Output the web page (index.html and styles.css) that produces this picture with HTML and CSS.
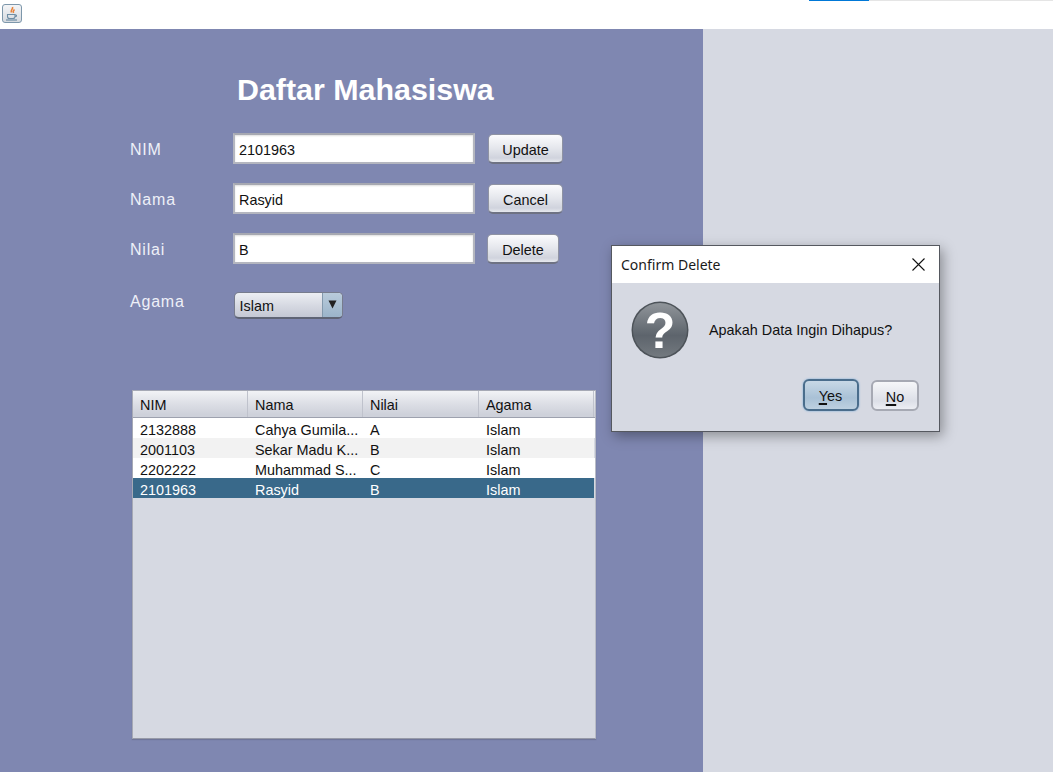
FILE: index.html
```html
<!DOCTYPE html>
<html lang="en">
<head>
    <meta charset="UTF-8">
    <meta name="viewport" content="width=device-width, initial-scale=1.0">
    <title>Daftar Mahasiswa</title>
    <link rel="stylesheet" href="styles.css">
</head>
<body>
    <div class="topbar">
        <div class="app-btn">
            <svg width="16" height="16" viewBox="0 0 16 16">
                <path d="M8.500 1c1 2-2.500 3-1 5.500M10.500 3.500c-1 1-2 1.500-1 3.500" fill="none" stroke="#e8823a" stroke-width="1.600"/>
                <path d="M3.500 8.500h7.500v2c0 1.500-1.500 2-2 2h-3.500c-.5 0-2-.5-2-2z" fill="none" stroke="#6f8ea5" stroke-width="1.100"/>
                <path d="M2 14h11" stroke="#6f8ea5" stroke-width="1.200"/>
                <path d="M11 9h1.500v1.500h-1.500" fill="none" stroke="#6f8ea5"/>
            </svg>
        </div>
        <div class="strip"><span class="strip-on"></span><span class="strip-off"></span></div>
    </div>

    <div class="main">
        <div class="panel">
            <h1 class="title">Daftar Mahasiswa</h1>

            <div class="form">
                <label class="lbl">NIM</label>
                <div class="field">2101963</div>
                <button type="button" class="btn">Update</button>

                <label class="lbl">Nama</label>
                <div class="field">Rasyid</div>
                <button type="button" class="btn">Cancel</button>

                <label class="lbl">Nilai</label>
                <div class="field">B</div>
                <button type="button" class="btn btn-small">Delete</button>
            </div>

            <div class="agama-row">
                <label class="lbl lbl-agama">Agama</label>
                <div class="combo">
                    <span class="combo-text">Islam</span>
                    <span class="combo-arrow"><svg width="9" height="9" viewBox="0 0 9 9"><path d="M.5 .5h8L4.500 8.500z" fill="#222"/></svg></span>
                </div>
            </div>

            <div class="table-box">
                <div class="row head">
                    <div class="cell">NIM</div>
                    <div class="cell">Nama</div>
                    <div class="cell">Nilai</div>
                    <div class="cell">Agama</div>
                </div>
                <div class="row">
                    <div class="cell">2132888</div>
                    <div class="cell">Cahya Gumila...</div>
                    <div class="cell">A</div>
                    <div class="cell">Islam</div>
                </div>
                <div class="row alt">
                    <div class="cell">2001103</div>
                    <div class="cell">Sekar Madu K...</div>
                    <div class="cell">B</div>
                    <div class="cell">Islam</div>
                </div>
                <div class="row">
                    <div class="cell">2202222</div>
                    <div class="cell">Muhammad S...</div>
                    <div class="cell">C</div>
                    <div class="cell">Islam</div>
                </div>
                <div class="row selected">
                    <div class="cell">2101963</div>
                    <div class="cell">Rasyid</div>
                    <div class="cell">B</div>
                    <div class="cell">Islam</div>
                </div>
            </div>
        </div>
        <div class="side"></div>
    </div>

    <div class="dialog">
        <div class="dialog-title">
            <span class="dialog-name">Confirm Delete</span>
            <svg class="dialog-x" width="13" height="13" viewBox="0 0 13 13"><path d="M.5.500l12 12M12.500.500l-12 12" stroke="#111" stroke-width="1.100" fill="none"/></svg>
        </div>
        <div class="dialog-body">
            <div class="dialog-msg">
                <svg class="q-icon" width="58" height="58" viewBox="0 0 58 58">
                    <defs>
                        <linearGradient id="qfill" x1="0" y1="0" x2="0" y2="1">
                            <stop offset="0" stop-color="#90959a"/>
                            <stop offset="0.6" stop-color="#5d646c"/>
                            <stop offset="1" stop-color="#73797f"/>
                        </linearGradient>
                    </defs>
                    <circle cx="29" cy="29" r="28.500" fill="#4d5359"/>
                    <circle cx="29" cy="29" r="27" fill="url(#qfill)"/>
                    <text x="29" y="47" class="q-mark" text-anchor="middle">?</text>
                </svg>
                <span class="msg-text">Apakah Data Ingin Dihapus?</span>
            </div>
            <div class="dialog-btns">
                <button type="button" class="dbtn dbtn-yes"><u>Y</u>es</button>
                <button type="button" class="dbtn dbtn-no"><u>N</u>o</button>
            </div>
        </div>
    </div>
</body>
</html>
```

FILE: styles.css
```css
html, body {
    margin: 0;
    padding: 0;
}
body {
    width: 1053px;
    height: 772px;
    overflow: hidden;
    background-color: #fff;
    font-family: "Liberation Sans", Arial, sans-serif;
    font-size: 14.4px;
    color: #111;
    position: relative;
}

/* top bar */
.topbar {
    height: 29px;
    background-color: #fff;
    position: relative;
    padding: 4px 0 0 2px;
    box-sizing: border-box;
}
.app-btn {
    width: 20px;
    height: 19px;
    box-sizing: border-box;
    border: 1px solid #7d97ab;
    border-radius: 3px;
    background: linear-gradient(#f4f5f7, #d5d9df);
    display: flex;
    align-items: center;
    justify-content: center;
}
.strip {
    position: absolute;
    top: 0;
    left: 809px;
    right: 0;
    height: 1px;
    display: flex;
}
.strip-on {
    width: 60px;
    background-color: #0078d7;
}
.strip-off {
    flex: 1;
    background-color: #e5e5e5;
}

/* main area */
.main {
    display: flex;
    height: 743px;
    background-color: #d6d9e2;
}
.panel {
    width: 703px;
    background-color: #7f87b1;
    box-sizing: border-box;
    padding: 43px 0 0 130px;
}
.side {
    flex: 1;
}
.title {
    margin: 0 0 27px 107px;
    font-size: 30.400px;
    line-height: 34px;
    font-weight: bold;
    color: #fff;
}

/* form */
.form {
    display: grid;
    grid-template-columns: 103px 242px auto;
    grid-auto-rows: 31px;
    row-gap: 19px;
    align-items: center;
    justify-items: start;
}
.lbl {
    font-size: 16px;
    letter-spacing: 0.8px;
    color: #eef0f8;
    padding-top: 3px;
}
.field {
    width: 242px;
    height: 31px;
    box-sizing: border-box;
    background-color: #fff;
    border: 2px solid #b4b6bf;
    border-top-color: #a6a8b1;
    padding: 2px 4px 0;
    line-height: 27px;
    box-shadow: inset 0 1px 2px #ddd;
}
.btn {
    margin: 1px 0 0 13px;
    width: 75px;
    height: 30px;
    padding: 2px 0 0;
    box-sizing: border-box;
    font-family: inherit;
    font-size: 14.4px;
    color: #111;
    border: 1px solid #8f93a3;
    border-bottom: 2px solid #6e7283;
    border-radius: 5px;
    background: linear-gradient(#fbfbfd, #e4e6ec 50%, #d0d3dd 85%, #e6e8ee);
}
.btn-small {
    margin-left: 12px;
    width: 72px;
}

.agama-row {
    display: flex;
    align-items: flex-start;
    margin-top: 28px;
}
.lbl-agama {
    width: 104px;
    padding-top: 0;
    line-height: 19px;
}
.combo {
    width: 109px;
    height: 27px;
    box-sizing: border-box;
    border: 1px solid #777c8d;
    border-bottom: 2px solid #5f6475;
    border-radius: 5px;
    display: flex;
    overflow: hidden;
    background: linear-gradient(#eceef3, #d5d8e1 55%, #c4c8d4);
}
.combo-text {
    flex: 1;
    padding-left: 4.500px;
    line-height: 26px;
}
.combo-arrow {
    width: 20px;
    background: linear-gradient(#b9cbdb, #9bb4ca);
    border-left: 1px solid #8399ad;
    display: flex;
    align-items: flex-start;
    justify-content: center;
    padding-top: 7px;
    box-sizing: border-box;
}

/* table */
.table-box {
    width: 464px;
    height: 349px;
    box-sizing: border-box;
    margin: 71px 0 0 2px;
    border: 1px solid #a6a9b5;
    border-right-color: #b9bcc6;
    border-bottom-color: #979aa8;
    box-shadow: 0 1px 1px rgba(80, 80, 100, 0.3);
    background-color: #d6d9e2;
}
.row {
    display: grid;
    grid-template-columns: 115px 115px 116px 115px;
    grid-template-rows: 100%;
    height: 20px;
    line-height: 21px;
    background-color: #fff;
}
.row.alt {
    background-color: #f2f2f2;
    margin-right: 1px;
}
.row.selected {
    background-color: #39698a;
    color: #fff;
    margin-right: 1px;
}
.cell {
    box-sizing: border-box;
    padding: 2px 0 0 7px;
    white-space: nowrap;
    overflow: hidden;
}
.row.head {
    height: 27px;
    line-height: 25px;
    box-sizing: border-box;
    background: linear-gradient(#f2f3f6, #dcdee5 50%, #ced1da 90%);
    border-bottom: 1px solid #9da1ae;
}
.head .cell {
    border-right: 1px solid #bfc2cc;
}

/* dialog */
.dialog {
    position: absolute;
    left: 611px;
    top: 245px;
    width: 329px;
    height: 187px;
    box-sizing: border-box;
    border: 1px solid #55585f;
    background-color: #d6d9e2;
    box-shadow: 3px 4px 12px rgba(0, 0, 0, 0.35);
    display: flex;
    flex-direction: column;
}
.dialog-title {
    height: 37px;
    flex: none;
    background-color: #fff;
    display: flex;
    align-items: center;
    justify-content: space-between;
    padding: 0 14px 0 9px;
}
.dialog-name {
    font-family: "Noto Sans", "Open Sans", sans-serif;
    font-size: 14px;
    color: #1a1a1a;
}
.dialog-body {
    flex: 1;
    padding: 18px 20px 0 19px;
}
.dialog-msg {
    display: flex;
    align-items: center;
    gap: 20px;
}
.q-icon {
    flex: none;
}
.q-mark {
    font-family: "Liberation Sans", Arial, sans-serif;
    font-weight: bold;
    font-size: 50px;
    fill: #fff;
}
.dialog-btns {
    display: flex;
    justify-content: flex-end;
    align-items: flex-start;
    gap: 12px;
    margin-top: 20px;
}
.dbtn {
    box-sizing: border-box;
    font-family: inherit;
    font-size: 14.4px;
    color: #111;
    border-radius: 6px;
    padding: 2px 0 0;
}
.dbtn u {
    text-decoration-thickness: 2px;
    text-underline-offset: 2px;
}
.dbtn-yes {
    width: 56px;
    height: 32px;
    padding-right: 1px;
    border: 2px solid #4a6d8c;
    background: linear-gradient(#c8d8e6, #a9c1d6 60%, #bdd0e0);
    box-shadow: 0 0 2px #6ba5d8;
}
.dbtn-no {
    width: 48px;
    height: 31px;
    margin-top: 1px;
    border: 2px solid #a6a9b3;
    background: linear-gradient(#f6f7f9, #dcdfe7 70%, #eceef3);
}
```
